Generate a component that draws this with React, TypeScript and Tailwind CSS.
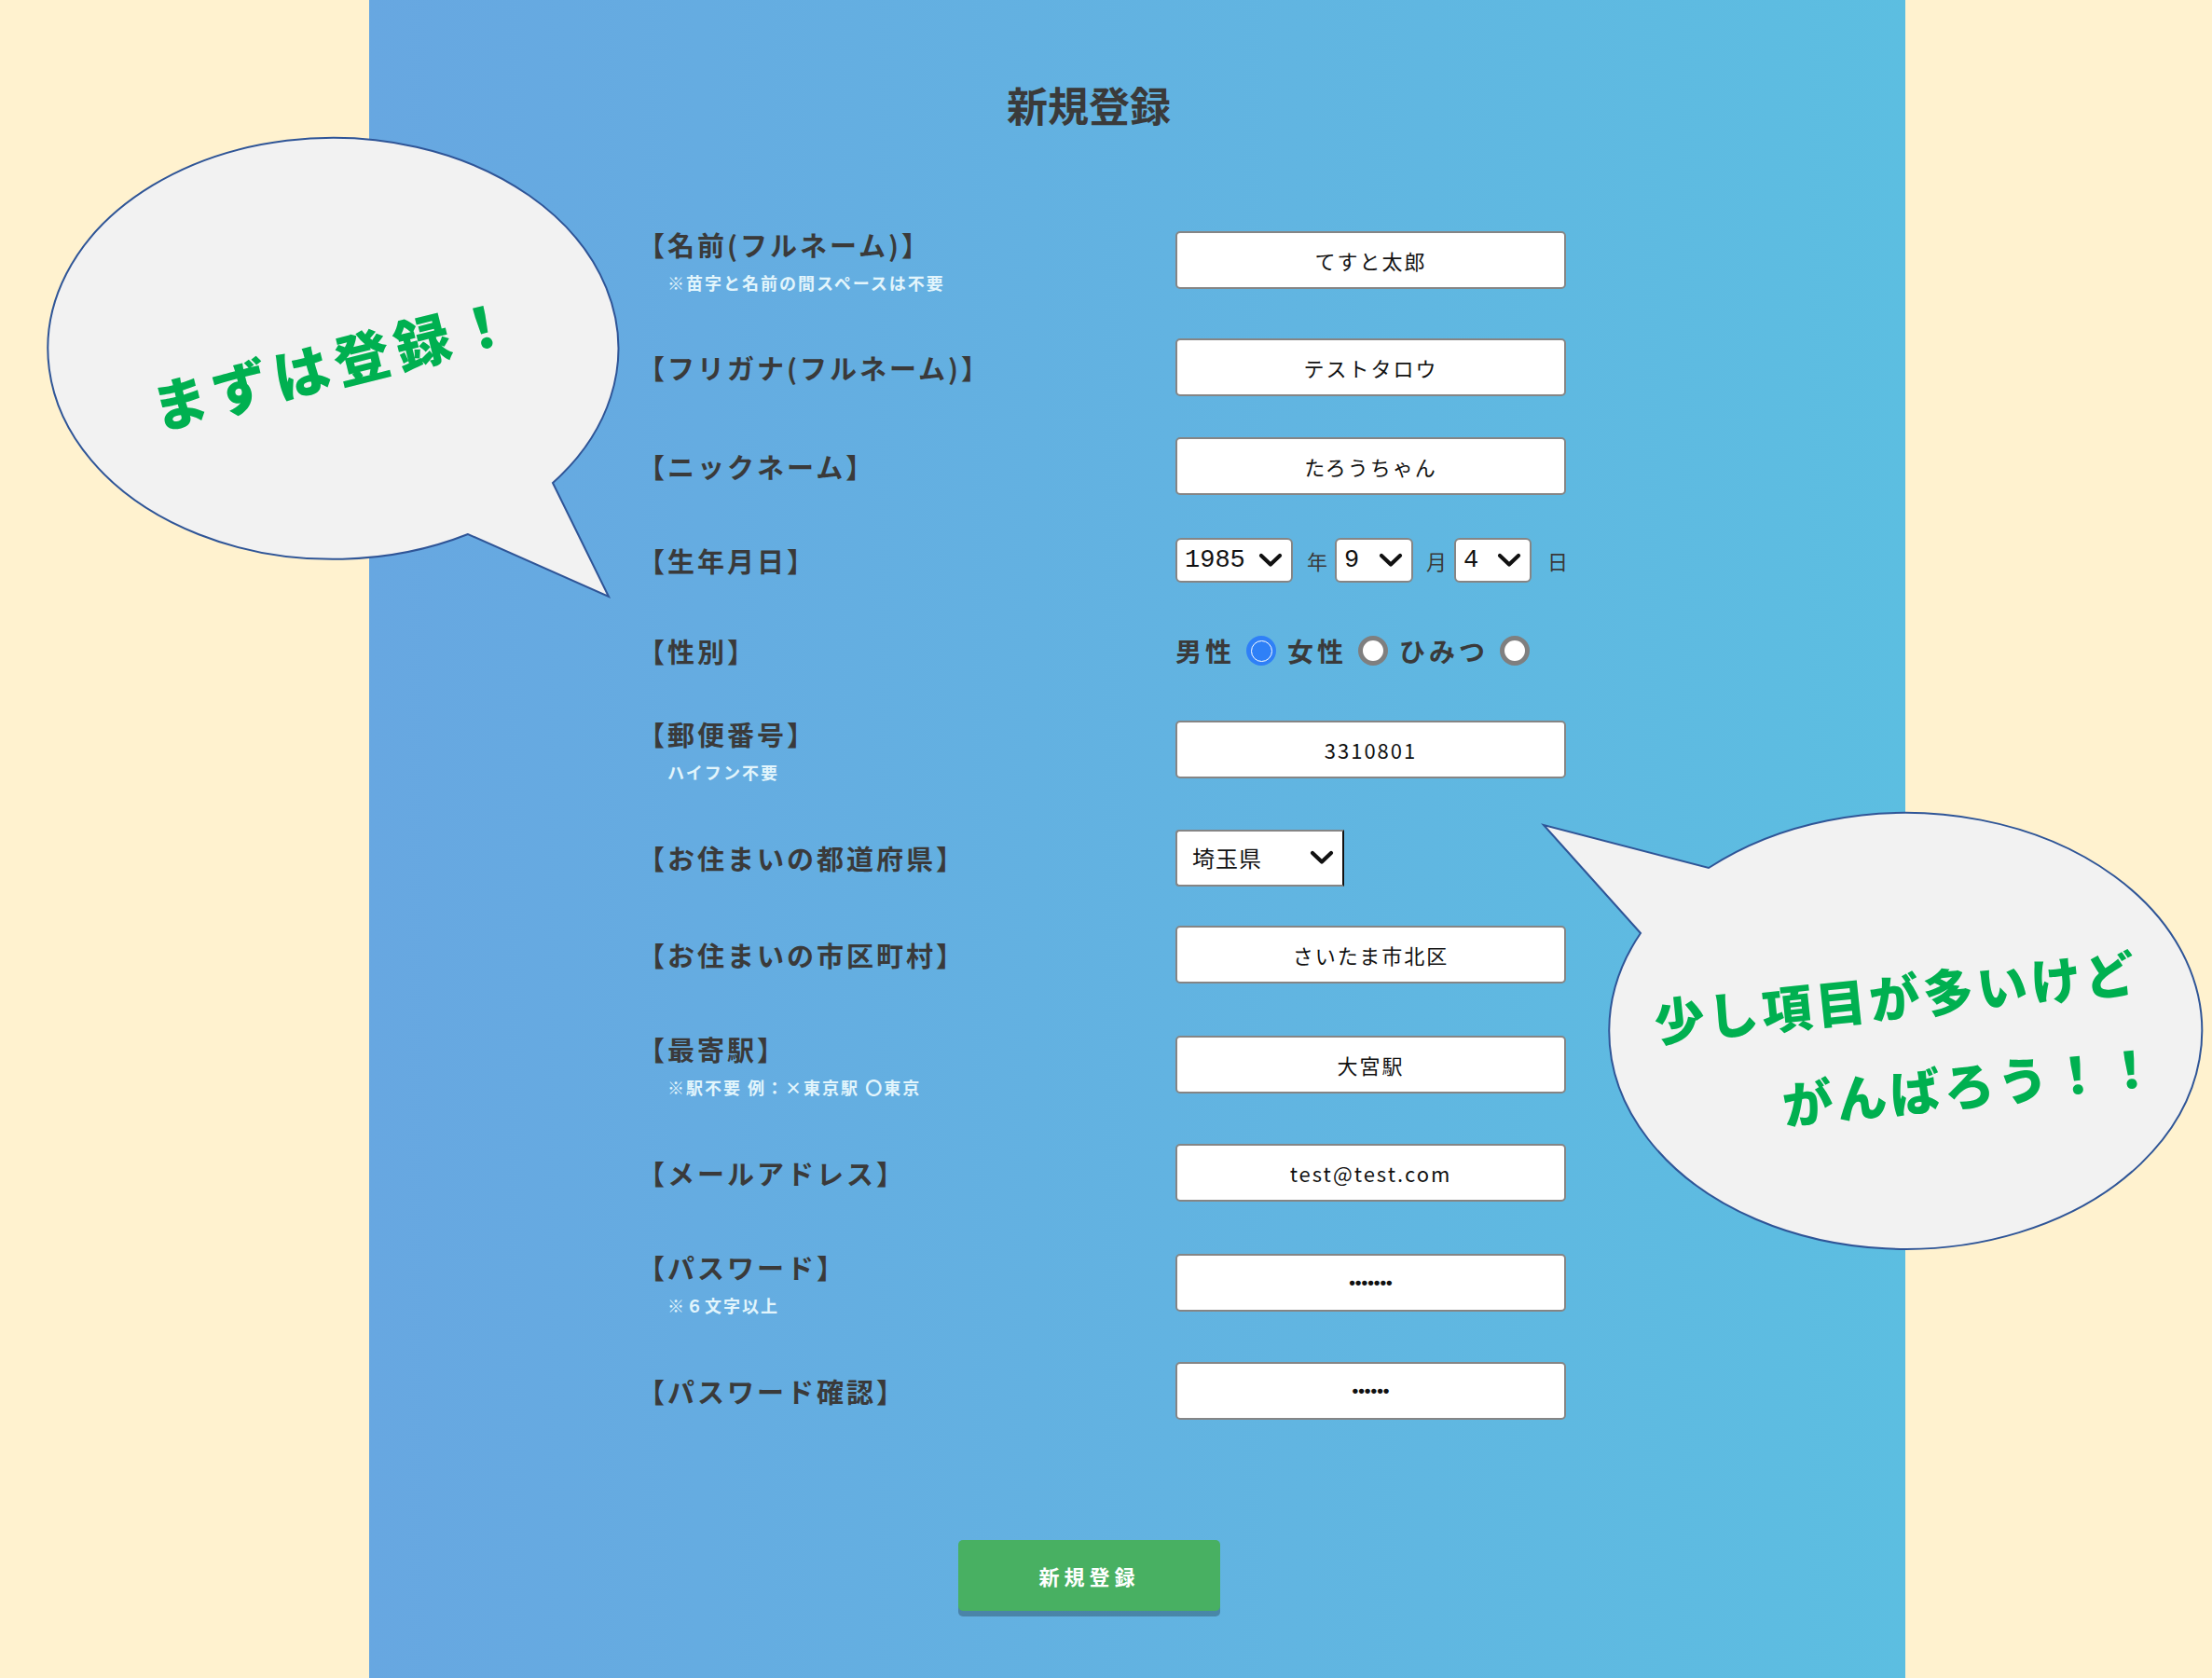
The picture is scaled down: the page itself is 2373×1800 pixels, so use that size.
import React from "react";

const Chevron = ({ className = "" }: { className?: string }) => (
  <svg viewBox="0 0 26 16" className={className} fill="none">
    <polyline points="3,3 13,12.5 23,3" stroke="#111" strokeWidth="4.2" strokeLinecap="round" strokeLinejoin="round" />
  </svg>
);

function Label({ text, note }: { text: string; note?: string }) {
  return (
    <div className="w-[566px] shrink-0 flex flex-col -ml-[11px] mr-[11px]">
      <span className="text-[29px] leading-[36px] font-bold text-[#3a3a3a] tracking-[3px]">{text}</span>
      {note && (
        <span className="mt-[12px] pl-[32px] text-[18px] leading-[22px] font-bold text-[#e2f5fc] tracking-[2px]">
          {note}
        </span>
      )}
    </div>
  );
}

function TextBox({ value, dots = false }: { value: string; dots?: boolean }) {
  return (
    <input
      readOnly
      value={value}
      className={
        dots
          ? "w-[420px] h-[62px] bg-white border-2 border-[#858585] rounded-[5px] text-center text-[19px] text-[#111] font-['Liberation_Sans',sans-serif] font-bold outline-none"
          : "w-[420px] h-[62px] bg-white border-2 border-[#858585] rounded-[5px] text-center text-[22px] text-[#111] tracking-[2px] outline-none"
      }
    />
  );
}

function MiniSelect({ value, w }: { value: string; w: string }) {
  return (
    <div
      className={`${w} h-[48px] bg-white border-2 border-[#858585] rounded-[6px] flex items-center justify-between pl-[8px] pr-[9px]`}
    >
      <span className="font-['Liberation_Mono',monospace] text-[27px] text-[#111] leading-none">{value}</span>
      <Chevron className="w-[26px] h-[16px]" />
    </div>
  );
}

const Radio = ({ checked }: { checked?: boolean }) =>
  checked ? (
    <span className="w-[32px] h-[32px] rounded-full bg-[#2f80f7] flex items-center justify-center shrink-0">
      <span className="w-[23px] h-[23px] rounded-full border-[1.5px] border-white bg-[#2f80f7]" />
    </span>
  ) : (
    <span className="w-[32px] h-[32px] rounded-full border-[5px] border-[#7f7f7f] bg-white shrink-0" />
  );

export default function App() {
  return (
    <div className="relative w-[2373px] h-[1800px] overflow-hidden bg-[#fff2cf] font-['Noto_Sans_CJK_JP','Noto_Sans',sans-serif]">
      <div className="ml-[396px] w-[1648px] h-[1800px] bg-gradient-to-r from-[#67a7e1] to-[#5cbee1]">
        <div className="ml-[299px] w-[985px] flex flex-col">
          <h1 className="mt-[90px] w-[946px] text-center text-[44px] leading-[44px] font-bold text-[#3a3a3a]">新規登録</h1>

          <div className="mt-[114px] h-[62px] flex items-center">
            <Label text="【名前(フルネーム)】" note="※苗字と名前の間スペースは不要" />
            <TextBox value="てすと太郎" />
          </div>

          <div className="mt-[53px] h-[62px] flex items-center">
            <Label text="【フリガナ(フルネーム)】" />
            <TextBox value="テストタロウ" />
          </div>

          <div className="mt-[44px] h-[62px] flex items-center">
            <Label text="【ニックネーム】" />
            <TextBox value="たろうちゃん" />
          </div>

          <div className="mt-[39px] h-[62px] flex items-center">
            <Label text="【生年月日】" />
            <div className="flex items-center text-[22px] text-[#3a3a3a]">
              <MiniSelect value="1985" w="w-[126px]" />
              <span className="ml-[15px] mr-[8px]">年</span>
              <MiniSelect value="9" w="w-[84px]" />
              <span className="ml-[14px] mr-[8px]">月</span>
              <MiniSelect value="4" w="w-[83px]" />
              <span className="ml-[17px]">日</span>
            </div>
          </div>

          <div className="mt-[35px] h-[62px] flex items-center">
            <Label text="【性別】" />
            <div className="flex items-center gap-[12px] text-[28px] font-bold text-[#3a3a3a] tracking-[4px]">
              <span>男性</span>
              <Radio checked />
              <span>女性</span>
              <Radio />
              <span>ひみつ</span>
              <Radio />
            </div>
          </div>

          <div className="mt-[44px] h-[62px] flex items-center">
            <Label text="【郵便番号】" note="ハイフン不要" />
            <TextBox value="3310801" />
          </div>

          <div className="mt-[54px] h-[62px] flex items-center">
            <Label text="【お住まいの都道府県】" />
            <div className="w-[181px] h-[61px] bg-white border-2 border-[#858585] border-r-[#111] rounded-l-[4px] flex items-center justify-between pl-[16px] pr-[9px]">
              <span className="text-[24px] text-[#111] tracking-[1px]">埼玉県</span>
              <Chevron className="w-[26px] h-[16px]" />
            </div>
          </div>

          <div className="mt-[42px] h-[62px] flex items-center">
            <Label text="【お住まいの市区町村】" />
            <TextBox value="さいたま市北区" />
          </div>

          <div className="mt-[56px] h-[62px] flex items-center">
            <Label text="【最寄駅】" note="※駅不要 例：×東京駅 〇東京" />
            <TextBox value="大宮駅" />
          </div>

          <div className="mt-[54px] h-[62px] flex items-center">
            <Label text="【メールアドレス】" />
            <TextBox value="test@test.com" />
          </div>

          <div className="mt-[56px] h-[62px] flex items-center">
            <Label text="【パスワード】" note="※６文字以上" />
            <TextBox value="•••••••" dots />
          </div>

          <div className="mt-[54px] h-[62px] flex items-center">
            <Label text="【パスワード確認】" />
            <TextBox value="••••••" dots />
          </div>

          <button className="mt-[129px] ml-[333px] w-[281px] h-[76px] rounded-[5px] bg-[#48b062] shadow-[0_6px_0_rgba(0,0,0,0.25)] text-white text-[22px] font-bold tracking-[5px]">
            新規登録
          </button>
        </div>
      </div>

      <svg className="absolute inset-0 pointer-events-none" width="2373" height="1800" viewBox="0 0 2373 1800">
        <path
          d="M593 518 L653 640 L502 573 A306 226 0 1 1 593 518 Z"
          fill="#f2f2f2"
          stroke="#2f5597"
          strokeWidth="2"
        />
        <text
          x="358"
          y="387"
          transform="rotate(-14 358 387)"
          textAnchor="middle"
          dominantBaseline="central"
          fill="#00b050"
          fontSize="60"
          fontWeight="900"
          letterSpacing="7"
          fontFamily="'Noto Sans CJK JP', sans-serif"
        >
          まずは登録！
        </text>

        <path
          d="M1760 1001 L1656 885 L1833 931 A318 234 0 1 1 1760 1001 Z"
          fill="#f2f2f2"
          stroke="#2f5597"
          strokeWidth="2"
        />
        <text
          x="2034"
          y="1067"
          transform="rotate(-6 2034 1067)"
          textAnchor="middle"
          dominantBaseline="central"
          fill="#00b050"
          fontSize="54"
          fontWeight="900"
          letterSpacing="4"
          fontFamily="'Noto Sans CJK JP', sans-serif"
        >
          少し項目が多いけど
        </text>
        <text
          x="2114"
          y="1162"
          transform="rotate(-6 2114 1162)"
          textAnchor="middle"
          dominantBaseline="central"
          fill="#00b050"
          fontSize="54"
          fontWeight="900"
          letterSpacing="4"
          fontFamily="'Noto Sans CJK JP', sans-serif"
        >
          がんばろう！！
        </text>
      </svg>
    </div>
  );
}
